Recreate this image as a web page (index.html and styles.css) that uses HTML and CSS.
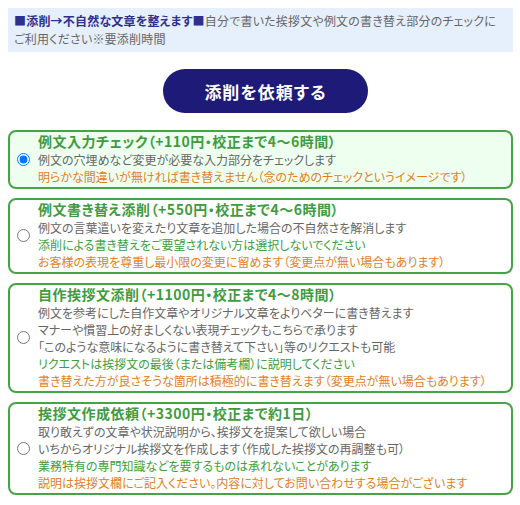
FILE: index.html
```html
<!DOCTYPE html>
<html lang="ja">
<head>
<meta charset="utf-8">
<link rel="stylesheet" href="styles.css">
</head>
<body>
<div class="info">
  <span class="info-head">■添削→不自然な文章を整えます■</span>自分で書いた挨拶文や例文の書き替え部分のチェックに<br>ご利用ください※要添削時間
</div>
<div class="btn-row">
  <button class="btn" type="button">添削を依頼する</button>
</div>
<div class="options">
  <label class="card selected">
    <input type="radio" name="plan" checked>
    <div class="content">
      <div class="title">例文入力チェック（+110円・校正まで4〜6時間）</div>
      <div class="line">例文の穴埋めなど変更が必要な入力部分をチェックします</div>
      <div class="line orange">明らかな間違いが無ければ書き替えません（念のためのチェックというイメージです）</div>
    </div>
  </label>
  <label class="card">
    <input type="radio" name="plan">
    <div class="content">
      <div class="title">例文書き替え添削（+550円・校正まで4〜6時間）</div>
      <div class="line">例文の言葉遣いを変えたり文章を追加した場合の不自然さを解消します</div>
      <div class="line green">添削による書き替えをご要望されない方は選択しないでください</div>
      <div class="line orange">お客様の表現を尊重し最小限の変更に留めます（変更点が無い場合もあります）</div>
    </div>
  </label>
  <label class="card">
    <input type="radio" name="plan">
    <div class="content">
      <div class="title">自作挨拶文添削（+1100円・校正まで4〜8時間）</div>
      <div class="line">例文を参考にした自作文章やオリジナル文章をよりベターに書き替えます</div>
      <div class="line">マナーや慣習上の好ましくない表現チェックもこちらで承ります</div>
      <div class="line">「このような意味になるように書き替えて下さい」等のリクエストも可能</div>
      <div class="line green">リクエストは挨拶文の最後（または備考欄）に説明してください</div>
      <div class="line orange">書き替えた方が良さそうな箇所は積極的に書き替えます（変更点が無い場合もあります）</div>
    </div>
  </label>
  <label class="card">
    <input type="radio" name="plan">
    <div class="content">
      <div class="title">挨拶文作成依頼（+3300円・校正まで約1日）</div>
      <div class="line">取り敢えずの文章や状況説明から、挨拶文を提案して欲しい場合</div>
      <div class="line">いちからオリジナル挨拶文を作成します（作成した挨拶文の再調整も可）</div>
      <div class="line green">業務特有の専門知識などを要するものは承れないことがあります</div>
      <div class="line orange">説明は挨拶文欄にご記入ください。内容に対してお問い合わせする場合がございます</div>
    </div>
  </label>
</div>
</body>
</html>
```

FILE: styles.css
```css
body {
  margin: 8px 7px 8px 8px;
  font-family: "Noto Sans CJK JP", "Noto Sans", sans-serif;
  font-feature-settings: "palt";
  font-size: 12px;
  color: #666;
  background: #fff;
}

.info {
  background: #e6effc;
  padding: 4px 6px;
  line-height: 18px;
  white-space: nowrap;
  letter-spacing: 0.2px;
}

.info-head {
  color: #2f2f8f;
  font-weight: bold;
}

.btn-row {
  display: flex;
  justify-content: center;
  padding-left: 10px;
  margin: 17px 0;
}

.btn {
  width: 205px;
  height: 44px;
  border: none;
  border-radius: 22px;
  background: #1e1a78;
  color: #fff;
  font-family: "Noto Sans CJK JP", sans-serif;
  font-feature-settings: "palt";
  font-size: 17px;
  font-weight: bold;
  letter-spacing: 1px;
}

.options {
  display: flex;
  flex-direction: column;
  gap: 9px;
}

.card {
  display: flex;
  align-items: center;
  border: 2px solid #46a346;
  border-radius: 8px;
  padding: 1px 4px 2px 7px;
  background: #fff;
}

.card.selected {
  background: #eefff0;
}

.card input {
  margin: 0 8px 0 0;
  width: 13px;
  height: 13px;
  flex: none;
}

.content {
  display: flex;
  flex-direction: column;
  white-space: nowrap;
}

.title {
  color: #3f9b3f;
  font-weight: bold;
  font-size: 14px;
  line-height: 16px;
  letter-spacing: 0.5px;
  margin-bottom: 2px;
}

.line {
  line-height: 17px;
}

.green {
  color: #3c9e3c;
}

.orange {
  color: #e2801e;
}
```
